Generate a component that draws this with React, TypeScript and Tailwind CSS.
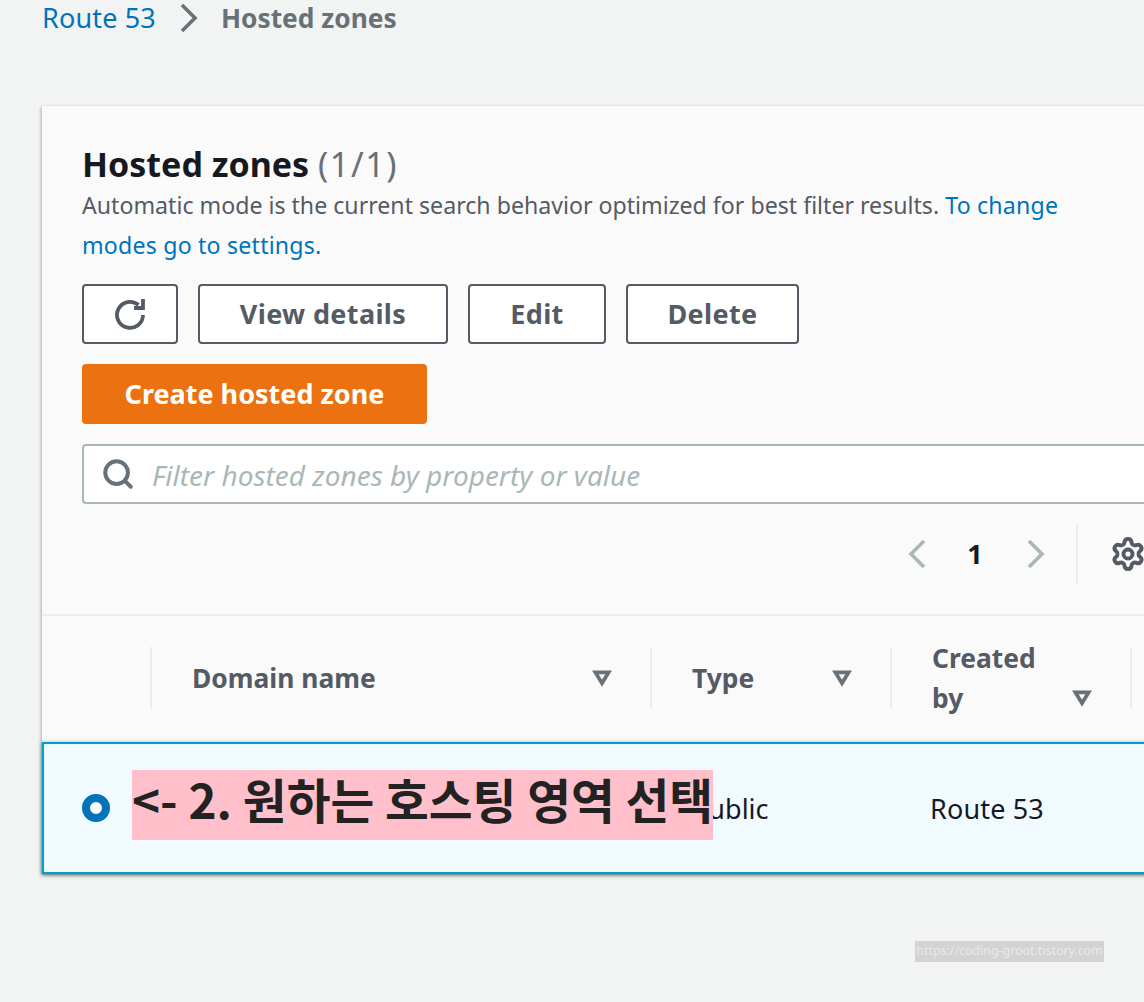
import { Search, Settings } from "lucide-react";

const font = "font-['Noto_Sans','Open_Sans',sans-serif]";

function Button({ label, className }: { label: string; className: string }) {
  return (
    <button className={`h-[60px] border-2 border-[#545b64] rounded-[4px] bg-white text-[#545b64] text-[27px] tracking-[0.35px] font-bold flex items-center justify-center ${className}`}>
      {label}
    </button>
  );
}

function SortIcon({ className = "" }: { className?: string }) {
  return (
    <svg viewBox="0 0 20 18" className={`w-[20px] h-[17px] shrink-0 translate-x-[1px] ${className}`} fill="none" stroke="#687078" strokeWidth="4" strokeLinejoin="miter">
      <path d="M3 2.5h14L10 14z" />
    </svg>
  );
}

function Chevron({ dir, className }: { dir: "left" | "right"; className: string }) {
  return (
    <svg viewBox="0 0 18 30" className={`w-[18px] h-[30px] shrink-0 ${className}`} fill="none" stroke="currentColor" strokeWidth="3.6">
      <path d={dir === "left" ? "M16 2 3 15l13 13" : "M2 2l13 13L2 28"} />
    </svg>
  );
}

function HeaderCell({ width, children }: { width: string; children: React.ReactNode }) {
  return (
    <div className={`${width} h-[62px] shrink-0 border-r-2 border-[#eaeded] pl-10 pr-[39px] flex justify-between items-center text-[26.4px] leading-10 font-bold text-[#545b64]`}>
      {children}
    </div>
  );
}

export default function App() {
  return (
    <div className={`${font} relative w-[1144px] h-[1002px] overflow-hidden bg-[#f2f3f3]`}>
      <div className="h-[106px] pl-[42px] flex items-start text-[27px] leading-[36px]">
        <a className="text-[#0073bb] tracking-[0.15px]">Route 53</a>
        <Chevron dir="right" className="ml-[24px] mr-[23px] mt-[3px] text-[#687078]" />
        <span className="font-bold text-[26.3px] text-[#687078]">Hosted zones</span>
      </div>

      <div className="w-[1200px] ml-[42px] bg-[#fafafa] shadow-[-1px_1px_3px_rgba(0,28,36,0.3)]">
        <div className="pl-10 pt-[37px]">
          <h1 className="text-[34px] leading-[42px] font-bold text-[#16191f]">
            Hosted zones <span className="font-normal text-[#687078] tracking-[1.6px]">(1/1)</span>
          </h1>
          <p className="w-[985px] text-[23.15px] leading-10 text-[#545b64]">
            Automatic mode is the current search behavior optimized for best filter results.{" "}
            <a className="text-[#0073bb] tracking-[0.2px]">To change modes go to settings.</a>
          </p>
          <div className="mt-[19px] flex gap-5">
            <button className="w-[96px] h-[60px] border-2 border-[#545b64] rounded-[4px] bg-white flex items-center justify-center">
              <svg viewBox="0 0 36 36" className="w-[36px] h-[36px]" fill="none" stroke="#545b64" strokeWidth="3.8">
                <path d="M31 19a13 13 0 1 1-4.5-10" />
                <path d="M31 3v9h-9" />
              </svg>
            </button>
            <Button label="View details" className="w-[250px]" />
            <Button label="Edit" className="w-[138px]" />
            <Button label="Delete" className="w-[173px]" />
          </div>
          <button className="mt-5 w-[345px] h-[60px] rounded-[4px] bg-[#ec7211] text-white text-[27px] font-bold">
            Create hosted zone
          </button>
          <div className="mt-5 h-[60px] border-2 border-[#aab7b8] rounded-[4px] bg-white flex items-center pl-[17px]">
            <Search className="w-[34px] h-[34px] text-[#687078]" strokeWidth={2.8} />
            <span className="ml-[17px] text-[28px] translate-y-[1px] italic text-[#aab7b8]">Filter hosted zones by property or value</span>
          </div>
          <div className="h-[110px] pt-5 text-[#aab7b8]">
            <div className="ml-[826px] flex items-center h-[60px]">
              <Chevron dir="left" className="" />
              <span className="w-[98px] text-center text-[27px] font-bold text-[#16191f]">1</span>
              <Chevron dir="right" className="ml-[3px]" />
              <div className="ml-[31px] h-[60px] border-l-2 border-[#eaeded]" />
              <Settings className="ml-[32px] w-[36px] h-[36px] text-[#545b64]" strokeWidth={2.6} />
            </div>
          </div>
        </div>

        <div className="h-[128px] border-t-2 border-[#eaeded] pt-[31px] flex items-start">
          <div className="w-[110px] h-[62px] shrink-0 border-r-2 border-[#eaeded]" />
          <HeaderCell width="w-[500px]">
            <span>Domain name</span>
            <SortIcon />
          </HeaderCell>
          <HeaderCell width="w-[240px]">
            <span>Type</span>
            <SortIcon />
          </HeaderCell>
          <HeaderCell width="w-[240px]">
            <span className="w-[120px]">Created by</span>
            <SortIcon className="translate-y-[20px]" />
          </HeaderCell>
        </div>

        <div className="h-[132px] border-2 border-[#00a1c9] bg-[#f1faff] shadow-[0_1px_4px_rgba(0,28,36,0.5)] flex items-center text-[27px] text-[#16191f]">
          <div className="w-[108px] shrink-0 pl-[38px]">
            <div className="w-7 h-7 rounded-full border-[8px] border-[#0073bb] bg-white" />
          </div>
          <div className="w-[540px] shrink-0" />
          <span className="w-[238px] shrink-0 translate-y-[1px]">Public</span>
          <span className="translate-y-[1px] tracking-[0.15px]">Route 53</span>
        </div>
      </div>

      <div className="absolute left-[132px] top-[770px] w-[581px] h-[70px] bg-[#ffc0cb] text-[#222222] text-[47.6px] font-bold leading-[58px] whitespace-nowrap font-['Noto_Sans_CJK_KR',sans-serif]">
        {"<- 2. 원하는 호스팅 영역 선택"}
      </div>
      <div className="absolute left-[915px] top-[941px] w-[189px] h-[21px] bg-[#d3d3d3] text-[#e9e9e9] text-[12.4px] leading-[19px] whitespace-nowrap text-center">
        https://coding-groot.tistory.com
      </div>
    </div>
  );
}
